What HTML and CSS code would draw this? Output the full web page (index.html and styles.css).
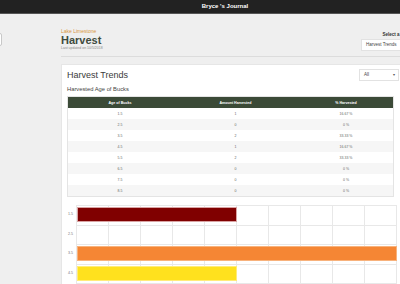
FILE: index.html
```html
<!DOCTYPE html>
<html lang="en">
<head>
  <meta charset="UTF-8" />
  <meta name="viewport" content="width=device-width, initial-scale=1.0" />
  <title>Bryce 's Journal - Harvest</title>
  <link rel="stylesheet" href="styles.css">
</head>
<body>

  <header class="topbar"><span>Bryce 's Journal</span></header>

  <div class="page">
    <aside class="side">
      <button class="side-toggle" aria-label="Menu"></button>
    </aside>

    <main class="main">
      <div class="page-head">
        <div class="titles">
          <div class="location">Lake Limestone</div>
          <h1>Harvest</h1>
          <div class="updated">Last updated on 10/5/2018</div>
        </div>
        <div class="view-pick">
          <label>Select a View</label>
          <div class="select wide">Harvest Trends</div>
        </div>
      </div>

      <section class="card">
        <div class="card-head">
          <h2>Harvest Trends</h2>
          <div class="select small">All</div>
        </div>

        <h3>Harvested Age of Bucks</h3>
        <table class="harvest-table">
          <thead>
            <tr><th>Age of Bucks</th><th>Amount Harvested</th><th>% Harvested</th></tr>
          </thead>
          <tbody>
            <tr><td>1.5</td><td>1</td><td>16.67 %</td></tr>
            <tr><td>2.5</td><td>0</td><td>0 %</td></tr>
            <tr><td>3.5</td><td>2</td><td>33.33 %</td></tr>
            <tr><td>4.5</td><td>1</td><td>16.67 %</td></tr>
            <tr><td>5.5</td><td>2</td><td>33.33 %</td></tr>
            <tr><td>6.5</td><td>0</td><td>0 %</td></tr>
            <tr><td>7.5</td><td>0</td><td>0 %</td></tr>
            <tr><td>8.5</td><td>0</td><td>0 %</td></tr>
          </tbody>
        </table>

        <div class="chart">
          <div class="chart-row"><span class="chart-label">1.5</span><div class="plot"><div class="bar red" style="width:160px"></div></div></div>
          <div class="chart-row"><span class="chart-label">2.5</span><div class="plot"></div></div>
          <div class="chart-row"><span class="chart-label">3.5</span><div class="plot"><div class="bar orange" style="width:320px"></div></div></div>
          <div class="chart-row"><span class="chart-label">4.5</span><div class="plot"><div class="bar yellow" style="width:160px"></div></div></div>
          <div class="chart-row"><span class="chart-label">5.5</span><div class="plot"><div class="bar green" style="width:320px"></div></div></div>
          <div class="chart-row"><span class="chart-label">6.5</span><div class="plot"></div></div>
          <div class="chart-row"><span class="chart-label">7.5</span><div class="plot"></div></div>
          <div class="chart-row"><span class="chart-label">8.5</span><div class="plot"></div></div>
        </div>
      </section>
    </main>
  </div>

</body>
</html>
```

FILE: styles.css
```css
:root {
  --bg-color: #efefef;
  --bar-dark: #222;
  --head-green: #3b4a37;
  --title-color: #3f4b3e;
  --grid: #e8e8e8;
}

html, body {
  height: 100%;
}

body {
  margin: 0;
  background-color: var(--bg-color);
  font-family: 'Liberation Sans', Arial, Helvetica, sans-serif;
  color: #333;
  overflow: hidden;
}

.topbar {
  height: 13px;
  background: var(--bar-dark);
  border-bottom: 1px solid #555;
  color: #fff;
  font-weight: bold;
  font-size: 6px;
  line-height: 13px;
  padding-left: 50px;
  text-align: center;
}

.page {
  display: flex;
}

.side {
  width: 61px;
  flex-shrink: 0;
}

.side-toggle {
  display: block;
  margin: 19px 0 0 -20px;
  width: 22px;
  height: 13px;
  padding: 0;
  background: #fff;
  border: 1px solid #c8c8c8;
  border-radius: 2px;
}

.main {
  width: 350px;
  flex-shrink: 0;
}

/* page header */
.page-head {
  display: flex;
  justify-content: space-between;
  align-items: flex-end;
  padding-top: 14px;
  padding-bottom: 5px;
  border-bottom: 1px solid #dcdcdc;
}

.location {
  color: #d9963f;
  font-size: 5px;
  line-height: 6px;
}

h1 {
  margin: 0;
  color: var(--title-color);
  font-size: 11px;
  line-height: 12px;
  font-weight: bold;
}

.updated {
  color: #888;
  font-size: 3.5px;
  line-height: 5px;
}

.view-pick {
  width: 50px;
  display: flex;
  flex-direction: column;
  align-items: flex-end;
}

.view-pick label {
  font-size: 4.5px;
  font-weight: bold;
  line-height: 5px;
  margin-bottom: 2px;
  white-space: nowrap;
  color: #333;
}

.select {
  box-sizing: border-box;
  background: #fff;
  border: 1px solid #e2e2e2;
  color: #444;
  position: relative;
}

.select.wide {
  width: 50px;
  height: 12px;
  font-size: 4.5px;
  line-height: 10px;
  padding-left: 4px;
}

.select.small {
  width: 40px;
  height: 12px;
  font-size: 4.5px;
  line-height: 10px;
  padding-left: 4px;
}

.select.small::after {
  content: '\25BE';
  position: absolute;
  right: 3px;
  top: 0;
  font-size: 4px;
  color: #555;
}

/* card */
.card {
  margin-top: 7px;
  margin-right: 7px;
  background: #fff;
  border: 1px solid #e6e6e6;
  border-right: none;
  padding: 4px 5px 20px 5px;
}

.card-head {
  display: flex;
  justify-content: space-between;
  align-items: center;
}

h2 {
  margin: 0;
  font-size: 9px;
  line-height: 12px;
  font-weight: normal;
  color: #3a3a3a;
}

h3 {
  margin: 5px 0 3px;
  font-size: 5.8px;
  line-height: 7px;
  font-weight: normal;
  color: #444;
}

/* table */
.harvest-table {
  width: 327px;
  border-collapse: collapse;
  border: 1px solid #e4e4e4;
  table-layout: fixed;
}

.harvest-table th {
  background: var(--head-green);
  color: #fff;
  font-size: 3.6px;
  font-weight: bold;
  height: 11px;
  padding: 0;
}

.harvest-table th:nth-child(1) { width: 104px; }
.harvest-table th:nth-child(2) { width: 127px; }

.harvest-table td {
  height: 11px;
  padding: 0;
  text-align: center;
  font-size: 3.5px;
  color: #666;
}

.harvest-table tbody tr:nth-child(even) td {
  background: #f6f6f6;
}

/* bar chart */
.chart {
  margin-top: 8px;
}

.chart-row {
  display: flex;
  height: 19.5px;
}

.chart-label {
  width: 9px;
  padding-right: 3px;
  box-sizing: border-box;
  text-align: right;
  font-size: 3.6px;
  line-height: 19.5px;
  color: #777;
}

.plot {
  width: 321px;
  border-top: 1px solid var(--grid);
  box-sizing: border-box;
  background-image: linear-gradient(to right, var(--grid) 1px, transparent 1px);
  background-size: 32px 100%;
  padding-top: 1px;
}

.bar {
  height: 15px;
  box-sizing: border-box;
  margin-left: 1px;
  border: 1px solid;
}

.bar.red { background: #800000; border-color: #d9a3a3; }
.bar.orange { background: #f58634; border-color: #f8b27c; }
.bar.yellow { background: #ffe11e; border-color: #ffec78; }
.bar.green { background: #4f6b3a; border-color: #9fb38e; }
```
